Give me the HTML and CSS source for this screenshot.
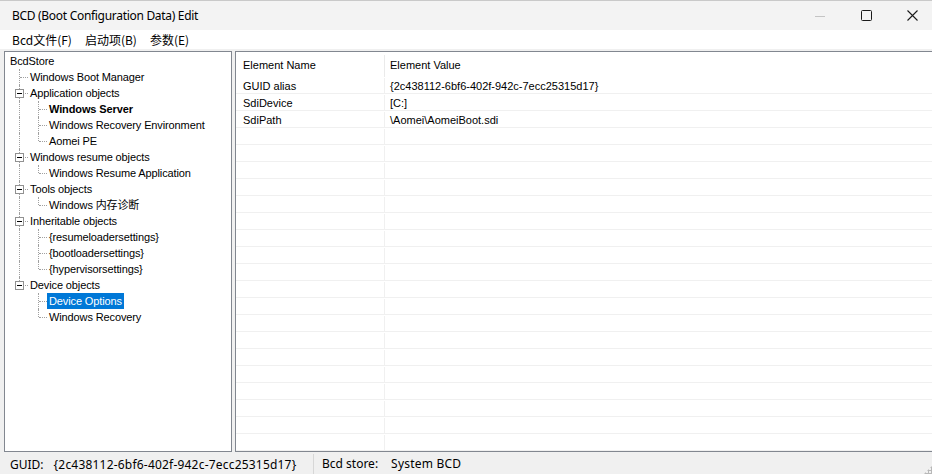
FILE: index.html
```html
<!DOCTYPE html>
<html>
<head>
<meta charset="utf-8">
<link rel="stylesheet" href="styles.css">
</head>
<body>
<div class="window">
  <div class="titlebar">
    <span class="title">BCD (Boot Configuration Data) Edit</span>
    <div class="caption">
      <span class="cbtn"><svg width="10" height="10" viewBox="0 0 10 10"><line x1="0" y1="5.5" x2="10" y2="5.5" stroke="#c4c4c4" stroke-width="1"/></svg></span>
      <span class="cbtn"><svg width="11" height="11" viewBox="0 0 11 11"><rect x="0.5" y="0.5" width="10" height="10" rx="1" fill="none" stroke="#1a1a1a" stroke-width="1"/></svg></span>
      <span class="cbtn"><svg width="11" height="11" viewBox="0 0 11 11"><path d="M0.5 0.5L10.5 10.5M10.5 0.5L0.5 10.5" stroke="#1a1a1a" stroke-width="1.1"/></svg></span>
    </div>
  </div>
  <div class="menubar">
    <span class="menu">Bcd文件(F)</span>
    <span class="menu">启动项(B)</span>
    <span class="menu">参数(E)</span>
  </div>
  <div class="client">
    <div class="tree">
      <div class="row"><span class="label root">BcdStore</span></div>
      <div class="row"><span class="cell tee"></span><span class="label">Windows Boot Manager</span></div>
      <div class="row"><span class="cell tee"><i class="box"></i></span><span class="label">Application objects</span></div>
      <div class="row"><span class="cell pipe"></span><span class="cell tee"></span><span class="label bold">Windows Server</span></div>
      <div class="row"><span class="cell pipe"></span><span class="cell tee"></span><span class="label">Windows Recovery Environment</span></div>
      <div class="row"><span class="cell pipe"></span><span class="cell ell"></span><span class="label">Aomei PE</span></div>
      <div class="row"><span class="cell tee"><i class="box"></i></span><span class="label">Windows resume objects</span></div>
      <div class="row"><span class="cell pipe"></span><span class="cell ell"></span><span class="label">Windows Resume Application</span></div>
      <div class="row"><span class="cell tee"><i class="box"></i></span><span class="label">Tools objects</span></div>
      <div class="row"><span class="cell pipe"></span><span class="cell ell"></span><span class="label">Windows 内存诊断</span></div>
      <div class="row"><span class="cell tee"><i class="box"></i></span><span class="label">Inheritable objects</span></div>
      <div class="row"><span class="cell pipe"></span><span class="cell tee"></span><span class="label">{resumeloadersettings}</span></div>
      <div class="row"><span class="cell pipe"></span><span class="cell tee"></span><span class="label">{bootloadersettings}</span></div>
      <div class="row"><span class="cell pipe"></span><span class="cell ell"></span><span class="label">{hypervisorsettings}</span></div>
      <div class="row"><span class="cell ell"><i class="box"></i></span><span class="label">Device objects</span></div>
      <div class="row"><span class="cell"></span><span class="cell tee"></span><span class="label selected">Device Options</span></div>
      <div class="row"><span class="cell"></span><span class="cell ell"></span><span class="label">Windows Recovery</span></div>
    </div>
    <div class="grid">
      <div class="ghead"><span class="c1">Element Name</span><span class="c2">Element Value</span></div>
      <div class="grow"><span class="c1">GUID alias</span><span class="c2">{2c438112-6bf6-402f-942c-7ecc25315d17}</span></div>
      <div class="grow"><span class="c1">SdiDevice</span><span class="c2">[C:]</span></div>
      <div class="grow"><span class="c1">SdiPath</span><span class="c2">\Aomei\AomeiBoot.sdi</span></div>
      <div class="grow"><span class="c1"></span><span class="c2"></span></div>
      <div class="grow"><span class="c1"></span><span class="c2"></span></div>
      <div class="grow"><span class="c1"></span><span class="c2"></span></div>
      <div class="grow"><span class="c1"></span><span class="c2"></span></div>
      <div class="grow"><span class="c1"></span><span class="c2"></span></div>
      <div class="grow"><span class="c1"></span><span class="c2"></span></div>
      <div class="grow"><span class="c1"></span><span class="c2"></span></div>
      <div class="grow"><span class="c1"></span><span class="c2"></span></div>
      <div class="grow"><span class="c1"></span><span class="c2"></span></div>
      <div class="grow"><span class="c1"></span><span class="c2"></span></div>
      <div class="grow"><span class="c1"></span><span class="c2"></span></div>
      <div class="grow"><span class="c1"></span><span class="c2"></span></div>
      <div class="grow"><span class="c1"></span><span class="c2"></span></div>
      <div class="grow"><span class="c1"></span><span class="c2"></span></div>
      <div class="grow"><span class="c1"></span><span class="c2"></span></div>
      <div class="grow"><span class="c1"></span><span class="c2"></span></div>
      <div class="grow"><span class="c1"></span><span class="c2"></span></div>
      <div class="grow"><span class="c1"></span><span class="c2"></span></div>
      <div class="grow"><span class="c1"></span><span class="c2"></span></div>
    </div>
  </div>
  <div class="statusbar">
    <div class="spanel first"><span class="skey">GUID:</span><span class="sval">{2c438112-6bf6-402f-942c-7ecc25315d17}</span></div>
    <div class="spanel"><span class="skey wide">Bcd store:</span><span class="sval">System BCD</span></div>
    <div class="grip"></div>
  </div>
</div>
</body>
</html>
```

FILE: styles.css
```css
* { box-sizing: border-box; }
html, body { margin: 0; padding: 0; }
body {
  width: 932px;
  height: 474px;
  overflow: hidden;
  background: #f0f0f0;
  font-family: "Noto Sans", "Noto Sans CJK SC", sans-serif;
}
.window {
  width: 932px;
  height: 474px;
  display: flex;
  flex-direction: column;
  overflow: hidden;
}
.titlebar {
  height: 30px;
  flex: none;
  background: #f3f3f3;
  border-top: 1px solid #c9c9c9;
  display: flex;
  align-items: center;
  justify-content: space-between;
}
.title {
  padding-left: 12px;
  font-size: 12px;
  letter-spacing: -0.3px;
  color: #000;
}
.caption {
  display: flex;
  margin-right: -3px;
  align-self: stretch;
}
.cbtn {
  width: 46px;
  display: flex;
  align-items: center;
  justify-content: center;
}
.menubar {
  height: 19px;
  flex: none;
  background: #fff;
  display: flex;
  align-items: center;
  padding-left: 5px;
  font-family: "Noto Sans CJK SC", sans-serif;
  font-size: 12px;
  color: #000;
}
.menu { padding: 0 7px; }
.menu + .menu { margin-left: -1px; }
.client {
  height: 403px;
  flex: none;
  display: flex;
  padding: 2px 0 0 4px;
  gap: 3px;
  background: #f0f0f0;
}
.tree {
  width: 228px;
  height: 401px;
  background: #fff;
  border: 1px solid #828790;
  padding: 1px 0 0 4px;
  font-family: "Liberation Sans", Arial, "Noto Sans CJK SC", sans-serif;
  font-size: 11px;
  color: #000;
}
.row {
  height: 16px;
  display: flex;
  align-items: stretch;
}
.cell {
  width: 19px;
  flex: none;
  position: relative;
}
.cell.pipe::before,
.cell.tee::before {
  content: "";
  position: absolute;
  left: 10px;
  top: 0;
  bottom: 0;
  border-left: 1px dotted #a0a0a0;
}
.cell.ell::before {
  content: "";
  position: absolute;
  left: 10px;
  top: 0;
  height: 8px;
  border-left: 1px dotted #a0a0a0;
}
.cell.tee::after,
.cell.ell::after {
  content: "";
  position: absolute;
  left: 11px;
  right: 0;
  top: 8px;
  border-top: 1px dotted #a0a0a0;
}
.box {
  position: absolute;
  left: 6px;
  top: 4px;
  width: 9px;
  height: 9px;
  background: #fff;
  border: 1px solid #919191;
  z-index: 1;
}
.box::after {
  content: "";
  position: absolute;
  left: 1px;
  top: 3px;
  width: 5px;
  height: 1px;
  background: #000;
}
.label {
  padding: 0 2px;
  line-height: 16px;
  white-space: nowrap;
  letter-spacing: -0.12px;
}
.label.root { margin-left: -1px; }
.label.bold { font-weight: bold; }
.label.selected { background: #0078d7; color: #fff; }
.grid {
  flex: 1;
  height: 401px;
  background: #fff;
  border: 1px solid #828790;
  border-right: none;
  font-family: "Liberation Sans", Arial, sans-serif;
  font-size: 11px;
  color: #000;
  overflow: hidden;
}
.ghead {
  height: 25px;
  display: flex;
  align-items: stretch;
}
.ghead .c1 {
  border-right: 1px solid #eaeaea;
  margin-top: 3px;
  line-height: 20px;
}
.ghead .c2 { line-height: 26px; }
.c1 {
  width: 149px;
  flex: none;
  padding-left: 7px;
  border-right: 1px solid #f0f0f0;
}
.c2 {
  flex: 1;
  padding-left: 5px;
}
.grow {
  height: 17px;
  display: flex;
  border-bottom: 1px solid #f0f0f0;
  line-height: 16px;
  padding-top: 1px;
}
.statusbar {
  height: 22px;
  flex: none;
  display: flex;
  align-items: stretch;
  background: #f0f0f0;
  font-family: "Noto Sans", "Noto Sans CJK SC", sans-serif;
  font-size: 12px;
  color: #000;
  position: relative;
}
.spanel {
  display: flex;
  align-items: center;
  padding-left: 8px;
}
.spanel.first {
  width: 314px;
  padding-left: 10px;
  border-right: 1px solid #d7d7d7;
  margin: 2px 0 0;
}
.skey { margin-right: 10px; }
.skey.wide { margin-right: 13px; }
.sval { letter-spacing: 0.2px; }
.grip {
  position: absolute;
  right: 0;
  bottom: 0;
  width: 8px;
  height: 8px;
  background:
    radial-gradient(circle, #b8b8b8 0 1px, transparent 1.2px) 0 0 / 3px 3px;
  clip-path: polygon(100% 0, 100% 100%, 0 100%);
}
```
